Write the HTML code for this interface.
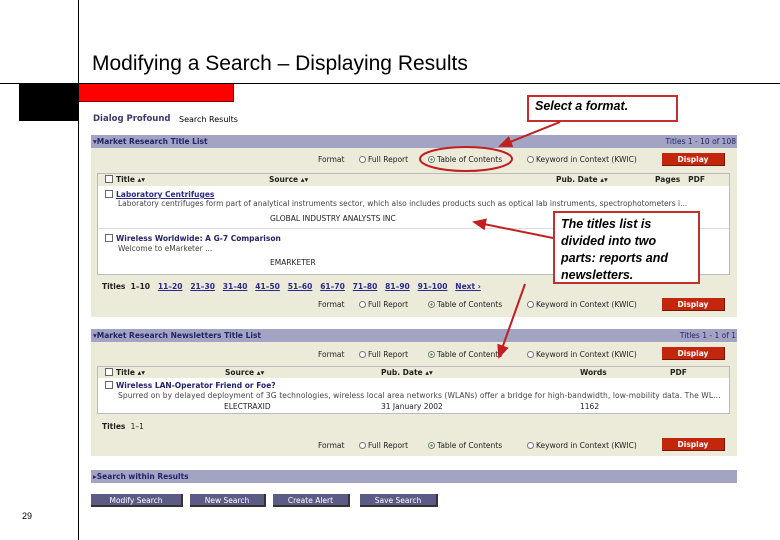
<!DOCTYPE html>
<html><head><meta charset="utf-8"><style>
*{margin:0;padding:0;box-sizing:border-box}
body{width:780px;height:540px;background:#fff;position:relative;overflow:hidden;font-family:"Liberation Sans",sans-serif}
.a{position:absolute;white-space:nowrap}
.s{font-family:"DejaVu Sans",sans-serif;font-size:7.5px;color:#222}
.bar{position:absolute;left:91px;width:646px;height:13px;background:#a3a3c3;font:bold 7.5px "DejaVu Sans",sans-serif;color:#24246a;line-height:13px;padding-left:2px}
.pan{position:absolute;left:91px;width:646px;background:#ecead9}
.disp{position:absolute;left:662px;width:63px;height:13px;background:#c4260c;color:#fff;font:bold 7.5px "DejaVu Sans",sans-serif;text-align:center;line-height:13px;border-right:1px solid #7a1405;border-bottom:1px solid #7a1405}
.rad{display:inline-block;width:7px;height:7px;border:1px solid #777;border-radius:50%;vertical-align:-1px;margin-right:2px;background:#fff}
.rad.on{background:radial-gradient(#3a3 30%,#fff 40%)}
.cb{display:inline-block;width:8px;height:8px;border:1px solid #666;background:#fff;vertical-align:-1px;margin-right:3px}
.btn{position:absolute;top:494px;height:13px;background:#5b5b85;color:#fff;font:7.5px "DejaVu Sans",sans-serif;text-align:center;line-height:13px;border-right:2px solid #333;border-bottom:2px solid #333}
.call{position:absolute;border:2px solid #c03030;background:#fff;font:bold italic 12.5px "Liberation Sans",sans-serif;color:#000;padding:2px 6px}
u{color:#2a2a8a}
.fr{position:absolute;left:0;width:780px;height:10px}
.fr span.i{position:absolute;top:0}
</style></head><body>
<div class="a" style="left:78px;top:0;width:1px;height:540px;background:#000"></div>
<div class="a" style="left:0;top:83px;width:780px;height:1px;background:#000"></div>
<div class="a" style="left:92px;top:52px;font-size:21px">Modifying a Search – Displaying Results</div>
<div class="a" style="left:19px;top:84px;width:59px;height:37px;background:#000"></div>
<div class="a" style="left:79px;top:84px;width:155px;height:18px;background:#f00;border-right:1px solid #800;border-bottom:1px solid #800"></div>
<div class="a" style="left:93px;top:114px;font:bold 8.5px 'DejaVu Sans',sans-serif;color:#3a3a6a">Dialog Profound</div>
<div class="a s" style="left:179px;top:115px;font-size:8px;color:#000">Search Results</div>

<div class="pan" style="top:148px;height:169px"></div>
<div class="bar" style="top:135px">▾Market Research Title List<span style="position:absolute;right:1px;font-weight:normal">Titles 1 - 10 of 108</span></div>
<div class="fr s" style="top:155px"><span class="i" style="left:318px">Format</span><span class="i" style="left:359px"><span class="rad"></span>Full Report</span><span class="i" style="left:428px"><span class="rad on"></span>Table of Contents</span><span class="i" style="left:527px"><span class="rad"></span>Keyword in Context (KWIC)</span></div>
<div class="disp" style="top:153px">Display</div>
<div class="a" style="left:97px;top:173px;width:633px;height:102px;background:#fff;border:1px solid #bbb"></div>
<div class="a" style="left:98px;top:174px;width:631px;height:12px;background:#ecead9"></div>
<div class="a s" style="left:105px;top:175px;font-weight:bold"><span class="cb"></span>Title ▴▾</div>
<div class="a s" style="left:269px;top:175px;font-weight:bold">Source ▴▾</div>
<div class="a s" style="left:556px;top:175px;font-weight:bold">Pub. Date ▴▾</div>
<div class="a s" style="left:655px;top:175px;font-weight:bold">Pages &nbsp;&nbsp;PDF</div>
<div class="a s" style="left:105px;top:190px;font-weight:bold"><span class="cb"></span><u>Laboratory Centrifuges</u></div>
<div class="a s" style="left:118px;top:199px;color:#444">Laboratory centrifuges form part of analytical instruments sector, which also includes products such as optical lab instruments, spectrophotometers i...</div>
<div class="a s" style="left:270px;top:214px">GLOBAL INDUSTRY ANALYSTS INC</div>
<div class="a" style="left:98px;top:228px;width:631px;height:1px;background:#ddd"></div>
<div class="a s" style="left:105px;top:234px;font-weight:bold;color:#24246a"><span class="cb"></span>Wireless Worldwide: A G-7 Comparison</div>
<div class="a s" style="left:118px;top:244px;color:#444">Welcome to eMarketer ...</div>
<div class="a s" style="left:270px;top:258px">EMARKETER</div>
<div class="a s" style="left:102px;top:282px;font-weight:bold">Titles &nbsp;1–10 &nbsp;&nbsp;<u>11–20</u> &nbsp;&nbsp;<u>21–30</u> &nbsp;&nbsp;<u>31–40</u> &nbsp;&nbsp;<u>41–50</u> &nbsp;&nbsp;<u>51–60</u> &nbsp;&nbsp;<u>61–70</u> &nbsp;&nbsp;<u>71–80</u> &nbsp;&nbsp;<u>81–90</u> &nbsp;&nbsp;<u>91–100</u> &nbsp;&nbsp;<u>Next ›</u></div>
<div class="fr s" style="top:300px"><span class="i" style="left:318px">Format</span><span class="i" style="left:359px"><span class="rad"></span>Full Report</span><span class="i" style="left:428px"><span class="rad on"></span>Table of Contents</span><span class="i" style="left:527px"><span class="rad"></span>Keyword in Context (KWIC)</span></div>
<div class="disp" style="top:298px">Display</div>

<div class="pan" style="top:342px;height:114px"></div>
<div class="bar" style="top:329px">▾Market Research Newsletters Title List<span style="position:absolute;right:1px;font-weight:normal">Titles 1 - 1 of 1</span></div>
<div class="fr s" style="top:350px"><span class="i" style="left:318px">Format</span><span class="i" style="left:359px"><span class="rad"></span>Full Report</span><span class="i" style="left:428px"><span class="rad on"></span>Table of Contents</span><span class="i" style="left:527px"><span class="rad"></span>Keyword in Context (KWIC)</span></div>
<div class="disp" style="top:347px">Display</div>
<div class="a" style="left:97px;top:366px;width:633px;height:48px;background:#fff;border:1px solid #bbb"></div>
<div class="a" style="left:98px;top:367px;width:631px;height:11px;background:#ecead9"></div>
<div class="a s" style="left:105px;top:368px;font-weight:bold"><span class="cb"></span>Title ▴▾</div>
<div class="a s" style="left:225px;top:368px;font-weight:bold">Source ▴▾</div>
<div class="a s" style="left:381px;top:368px;font-weight:bold">Pub. Date ▴▾</div>
<div class="a s" style="left:580px;top:368px;font-weight:bold">Words</div>
<div class="a s" style="left:670px;top:368px;font-weight:bold">PDF</div>
<div class="a s" style="left:105px;top:381px;font-weight:bold;color:#24246a"><span class="cb"></span>Wireless LAN-Operator Friend or Foe?</div>
<div class="a s" style="left:118px;top:391px;color:#444;letter-spacing:0.1px">Spurred on by delayed deployment of 3G technologies, wireless local area networks (WLANs) offer a bridge for high-bandwidth, low-mobility data. The WL...</div>
<div class="a s" style="left:224px;top:402px">ELECTRAXID</div>
<div class="a s" style="left:381px;top:402px">31 January 2002</div>
<div class="a s" style="left:580px;top:402px">1162</div>
<div class="a s" style="left:102px;top:422px;font-weight:bold">Titles &nbsp;<span style="font-weight:normal">1–1</span></div>
<div class="fr s" style="top:441px"><span class="i" style="left:318px">Format</span><span class="i" style="left:359px"><span class="rad"></span>Full Report</span><span class="i" style="left:428px"><span class="rad on"></span>Table of Contents</span><span class="i" style="left:527px"><span class="rad"></span>Keyword in Context (KWIC)</span></div>
<div class="disp" style="top:438px">Display</div>

<div class="bar" style="top:470px">▸Search within Results</div>
<div class="btn" style="left:91px;width:92px">Modify Search</div>
<div class="btn" style="left:190px;width:76px">New Search</div>
<div class="btn" style="left:273px;width:77px">Create Alert</div>
<div class="btn" style="left:360px;width:78px">Save Search</div>
<div class="a" style="left:22px;top:511px;font-size:9px">29</div>

<div class="call" style="left:527px;top:95px;width:151px;height:27px">Select a format.</div>
<div class="call" style="left:553px;top:211px;width:147px;height:73px;line-height:17px;padding-top:3px">The titles list is<br>divided into two<br>parts: reports and<br>newsletters.</div>
<svg class="a" style="left:0;top:0" width="780" height="540">
<defs><marker id="m" markerWidth="8" markerHeight="8" refX="6" refY="4" orient="auto"><path d="M0,1 L7,4 L0,7z" fill="#c02020"/></marker></defs>
<ellipse cx="466" cy="159" rx="46" ry="12" fill="none" stroke="#c02020" stroke-width="2"/>
<line x1="560" y1="122" x2="500" y2="146" stroke="#c02020" stroke-width="2" marker-end="url(#m)"/>
<line x1="553" y1="238" x2="474" y2="222" stroke="#c02020" stroke-width="2" marker-end="url(#m)"/>
<line x1="525" y1="284" x2="499" y2="357" stroke="#c02020" stroke-width="2" marker-end="url(#m)"/>
</svg>
</body></html>
